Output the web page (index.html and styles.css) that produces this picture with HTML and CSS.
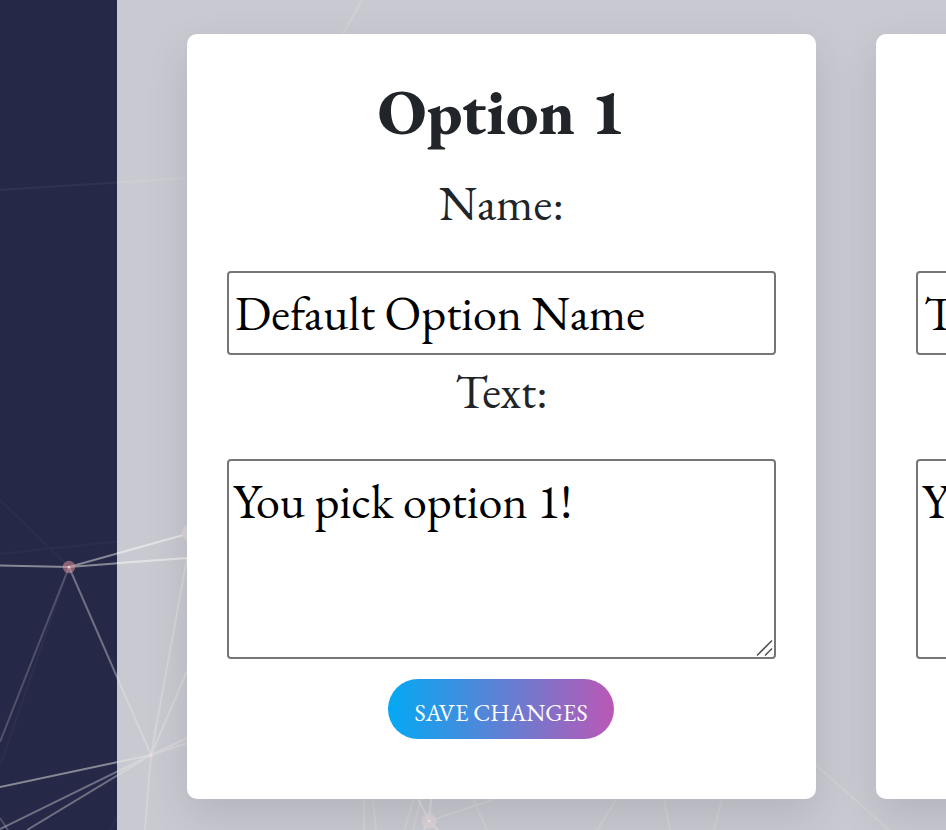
FILE: index.html
```html
<!DOCTYPE html>
<html lang="en">
<head>
<meta charset="utf-8">
<title>Options</title>
<link rel="stylesheet" href="styles.css">
</head>
<body>
<div class="app">
  <aside class="sidebar"></aside>
  <svg class="network" width="946" height="830" viewBox="0 0 946 830" fill="none" stroke="#e8e8e5" stroke-width="2" aria-hidden="true">
    <g opacity=".035"><path d="M0 554 187 534M0 500 69 567 0 766M151 755 110 830M151 755 240 830M151 755 187 764"/></g>
    <g opacity=".06"><path d="M0 190 117 182.500"/></g>
    <g opacity=".22"><path opacity=".6" d="M117 182.500 187 178"/><path d="M362 0 343 34M69 567 0 742M364 799V830M373 799 376 830M414 799 404 830M421 799 413 830M0 818 8 830M816 765 889 830M429 821 495 799M473 799 487 830M617 799 597 830M664 799 670 830M722 799 714 830"/></g>
    <g opacity=".38"><path d="M69 567 151 755 145 830M151 755 187 558M151 755 187 671M0 829 151 755 27 830M151 755 187 738M151 755 187 743"/></g>
    <g opacity=".5"><path d="M0 565.500 69 567 187 534M69 567 187 558M0 787 151 755M418 799 429 821 424 830M431 799 429 821 438 830"/></g>
    <g stroke="#f4f4f4" opacity=".4"><path d="M117 553.500 187 534M117 563 187 558"/></g>
    <g stroke="none"><circle cx="69" cy="567" r="6.200" fill="#e99aa2" opacity=".5"/><circle cx="69" cy="567" r="1.300" fill="#ead4db"/><circle cx="191" cy="533" r="9" fill="#d9d3d7"/><circle cx="429" cy="821" r="7.500" fill="#ddd3d6" opacity=".8"/><circle cx="429" cy="821" r="1.300" fill="#eee6e9"/><circle cx="151" cy="755" r="2" fill="#eadde2"/></g>
  </svg>
  <main class="cards">
    <form class="card">
      <h2>Option 1</h2>
      <label for="name1">Name:</label>
      <input id="name1" type="text" value="Default Option Name">
      <label for="text1">Text:</label>
      <div class="area">
        <textarea id="text1">You pick option 1!</textarea>
        <svg class="grip" width="18" height="18" viewBox="0 0 18 18" fill="none" stroke="#555" stroke-width="1.600" aria-hidden="true"><path d="M1 16.500 16 1.500M9 16.500 16 9.500"/></svg>
      </div>
      <button type="button">SAVE CHANGES</button>
    </form>
    <form class="card">
      <h2>&nbsp;</h2>
      <label for="name2">&nbsp;</label>
      <input id="name2" type="text" value="T">
      <label for="text2">&nbsp;</label>
      <div class="area">
        <textarea id="text2">Yo</textarea>
      </div>
    </form>
  </main>
</div>
</body>
</html>
```

FILE: styles.css
```css
* { box-sizing: border-box; }

body {
  margin: 0;
  overflow: hidden;
  font-family: "EB Garamond", "Liberation Serif", serif;
  font-size: 48px;
  color: #212529;
}

.app {
  position: relative;
  display: flex;
  width: 100vw;
  height: 830px;
  overflow: hidden;
  background: #c9c9d2;
}

.sidebar {
  flex: 0 0 117px;
  background: #252847;
}

.network {
  position: absolute;
  top: 0;
  left: 0;
}

.cards {
  position: relative;
  display: flex;
  align-items: flex-start;
  gap: 60px;
  padding: 34px 0 0 70px;
}

.card {
  display: flex;
  flex: 0 0 629px;
  flex-direction: column;
  align-items: center;
  height: 765px;
  padding: 39px 40px 40px;
  border-radius: 10px;
  background: #fff;
  box-shadow: 0 16px 44px rgba(0, 0, 0, .11);
}

h2 {
  margin: 0 0 17px;
  font-size: 64px;
  font-weight: 800;
  line-height: 77px;
}

label {
  margin-bottom: 32px;
  line-height: 72px;
}

input,
textarea {
  display: block;
  width: 549px;
  margin: 0;
  border: 2px solid #767676;
  border-radius: 4px;
  background: #fff;
  color: #000;
  font: inherit;
  outline: 0;
}

input {
  height: 84px;
  padding: 2px 4px 2px 6px;
}

.area {
  position: relative;
  margin-bottom: 20px;
}

textarea {
  height: 200px;
  padding: 3px 4px;
  line-height: 74px;
  resize: none;
  overflow: hidden;
}

.grip {
  position: absolute;
  right: 2px;
  bottom: 2px;
}

button {
  width: 226px;
  height: 60px;
  margin-right: 1px;
  padding: 7px 0 0;
  border: 0;
  border-radius: 30px;
  background: linear-gradient(90deg, #03a9f4, #ba58b5);
  color: #fff;
  font: inherit;
  font-size: 24px;
  white-space: nowrap;
}
```
